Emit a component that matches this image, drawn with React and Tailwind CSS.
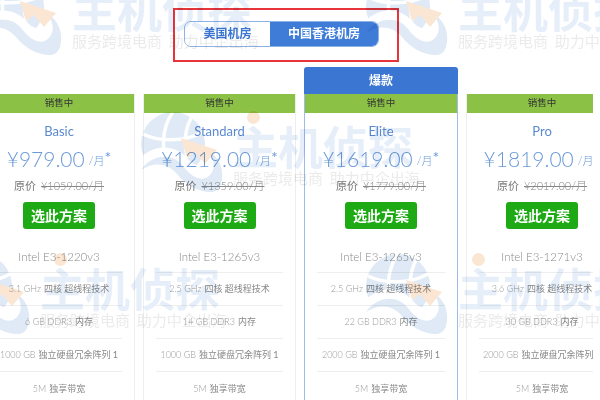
const cjk = "font-['Lato','Noto_Sans_CJK_SC',sans-serif]";

const plans = [
  { name: "Basic", price: "¥979.00", old: "¥1059.00", cpu: "Intel E3-1220v3", ghz: "3.1 GHz", ram: "6 GB", disk: "1000 GB", w: "w-[152px]" },
  { name: "Standard", price: "¥1219.00", old: "¥1359.00", cpu: "Intel E3-1265v3", ghz: "2.5 GHz", ram: "14 GB", disk: "1000 GB", w: "w-[153px]" },
  { name: "Elite", price: "¥1619.00", old: "¥1779.00", cpu: "Intel E3-1265v3", ghz: "2.5 GHz", ram: "22 GB", disk: "2000 GB", hot: true, w: "w-[154px]" },
  { name: "Pro", price: "¥1819.00", old: "¥2019.00", cpu: "Intel E3-1271v3", ghz: "3.6 GHz", ram: "30 GB", disk: "2000 GB", w: "w-[152px]" },
];

const marks = [
  { x: 72, y: 41 },
  { x: 233, y: 178 },
  { x: 40, y: 320 },
  { x: 458, y: 41 },
  { x: 458, y: 320 },
];

function Watermark({ x, y }) {
  return (
    <div
      className="absolute pointer-events-none mix-blend-multiply w-[260px] h-[90px]"
      style={{ left: x - 105, top: y - 70 }}
    >
      <svg className="absolute left-[7px] top-0" width="88" height="84" viewBox="0 0 88 84" fill="none">
        <circle cx="38" cy="36" r="32" fill="#dfeaf6" />
        <path d="M8 26C24 34 50 34 68 24M38 4C26 20 26 44 34 62M56 10C48 26 50 38 52 50" stroke="#ffffff" strokeWidth="3.5" />
        <path d="M0 56C16 34 40 36 52 50C60 60 74 62 80 50L88 84H30C34 70 14 68 0 56z" fill="#ffffff" />
        <path d="M6 62C16 46 38 44 48 58C58 72 72 76 78 62C80 56 78 48 72 42C84 48 90 62 86 76C84 82 80 84 76 84C62 84 50 76 42 66C32 54 18 54 6 62z" fill="#dfeaf6" />
        <path d="M46 30L82 42L70 56L60 44L52 50z" fill="#fbe6d3" />
      </svg>
      <div className="absolute left-[105px] top-[12px] flex items-center h-[50px] text-[45px] font-bold leading-none whitespace-nowrap font-['Noto_Sans_CJK_SC',sans-serif] text-[#e6eff9]">
        主机侦探
      </div>
      <div className="absolute left-[105px] top-[60px] h-[20px] text-[15px] leading-[20px] whitespace-nowrap font-['Noto_Sans_CJK_SC',sans-serif] text-[#ebebeb]">
        服务跨境电商&nbsp;&nbsp;助力中企出海
      </div>
      <div className="absolute left-[119px] top-[3px] w-[13px] h-[13px] rounded-full bg-[#fbe6d3]" />
    </div>
  );
}

function Row({ num, text, line }) {
  return (
    <div className={`h-[33px] flex items-center justify-center whitespace-nowrap text-[9px] text-[#888] ${line ? "border-b border-[#eeeeee]" : ""}`}>
      <span className="font-light text-[#999] mr-[3px]">{num}</span>
      <span>{text}</span>
    </div>
  );
}

function PlanCard({ plan }) {
  return (
    <div className={`${plan.w} shrink-0`}>
      <div className={plan.hot ? "h-[27px] rounded-t-[3px] bg-[#3a76d2] flex items-center justify-center text-[12px] font-bold text-white" : "h-[27px]"}>
        {plan.hot ? "爆款" : null}
      </div>
      <div className={plan.hot ? "border-x border-[#9dbcea] h-[306px]" : "border-x border-[#eeeeee] h-[306px]"}>
        <div className="h-[19px] bg-[#8bc145] flex items-center justify-center text-[9.5px] text-[#333]">销售中</div>
        <div className="mt-[9px] h-[20px] flex items-center justify-center text-[13px] text-[#5b8ad0]">{plan.name}</div>
        <div className="mt-[5px] h-[24px] flex items-center justify-center whitespace-nowrap text-[#6a9ad8]">
          <span className="text-[21px] font-light">{plan.price}</span>
          <span className="text-[11px] font-light ml-[4px] mt-[4px]">/月</span>
          <span className="text-[16px] self-start -mt-[2px]">*</span>
        </div>
        <div className="mt-[6px] h-[18px] flex items-center justify-center whitespace-nowrap">
          <span className="text-[11px] text-[#777] mr-[5px]">原价</span>
          <span className="text-[11px] font-light text-[#888] line-through">{plan.old}/月</span>
        </div>
        <div className="mt-[7px] flex justify-center">
          <div className="w-[72px] h-[27px] rounded-[3px] bg-[#1eaa14] flex items-center justify-center text-[14px] font-bold text-white">选此方案</div>
        </div>
        <div className="mx-[12px] mt-[13px]">
          <div className="h-[31px] flex items-center justify-center whitespace-nowrap text-[11.5px] font-light text-[#888] border-b border-[#eeeeee]">{plan.cpu}</div>
          <Row num={plan.ghz} text="四核 超线程技术" line />
          <Row num={plan.ram + " DDR3"} text="内存" line />
          <Row num={plan.disk} text="独立硬盘冗余阵列 1" line />
          <Row num="5M" text="独享带宽" />
        </div>
      </div>
    </div>
  );
}

export default function App() {
  return (
    <div className={`relative w-[600px] h-[400px] overflow-hidden bg-white ${cjk}`}>
      <div className="ml-[173px] mt-[8px] w-[226px] h-[54px] border-2 border-[#e8353b] pt-[11px] pl-[9px]">
        <div className="flex w-[195px] h-[26px] rounded-[7px] border border-[#8fb2e6] overflow-hidden text-[12px] font-bold">
          <div className="w-[85px] flex items-center justify-center text-[#3a76d2] bg-white">美国机房</div>
          <div className="flex-1 flex items-center justify-center text-white bg-[#3f7cd8]">中国香港机房</div>
        </div>
      </div>
      <div className="w-[593px] mt-[5px] overflow-hidden">
        <div className="flex gap-[8px] -ml-[17px]">
          {plans.map((p) => (
            <PlanCard key={p.name} plan={p} />
          ))}
        </div>
      </div>
      {marks.map((m) => (
        <Watermark key={m.x + "-" + m.y} x={m.x} y={m.y} />
      ))}
    </div>
  );
}
